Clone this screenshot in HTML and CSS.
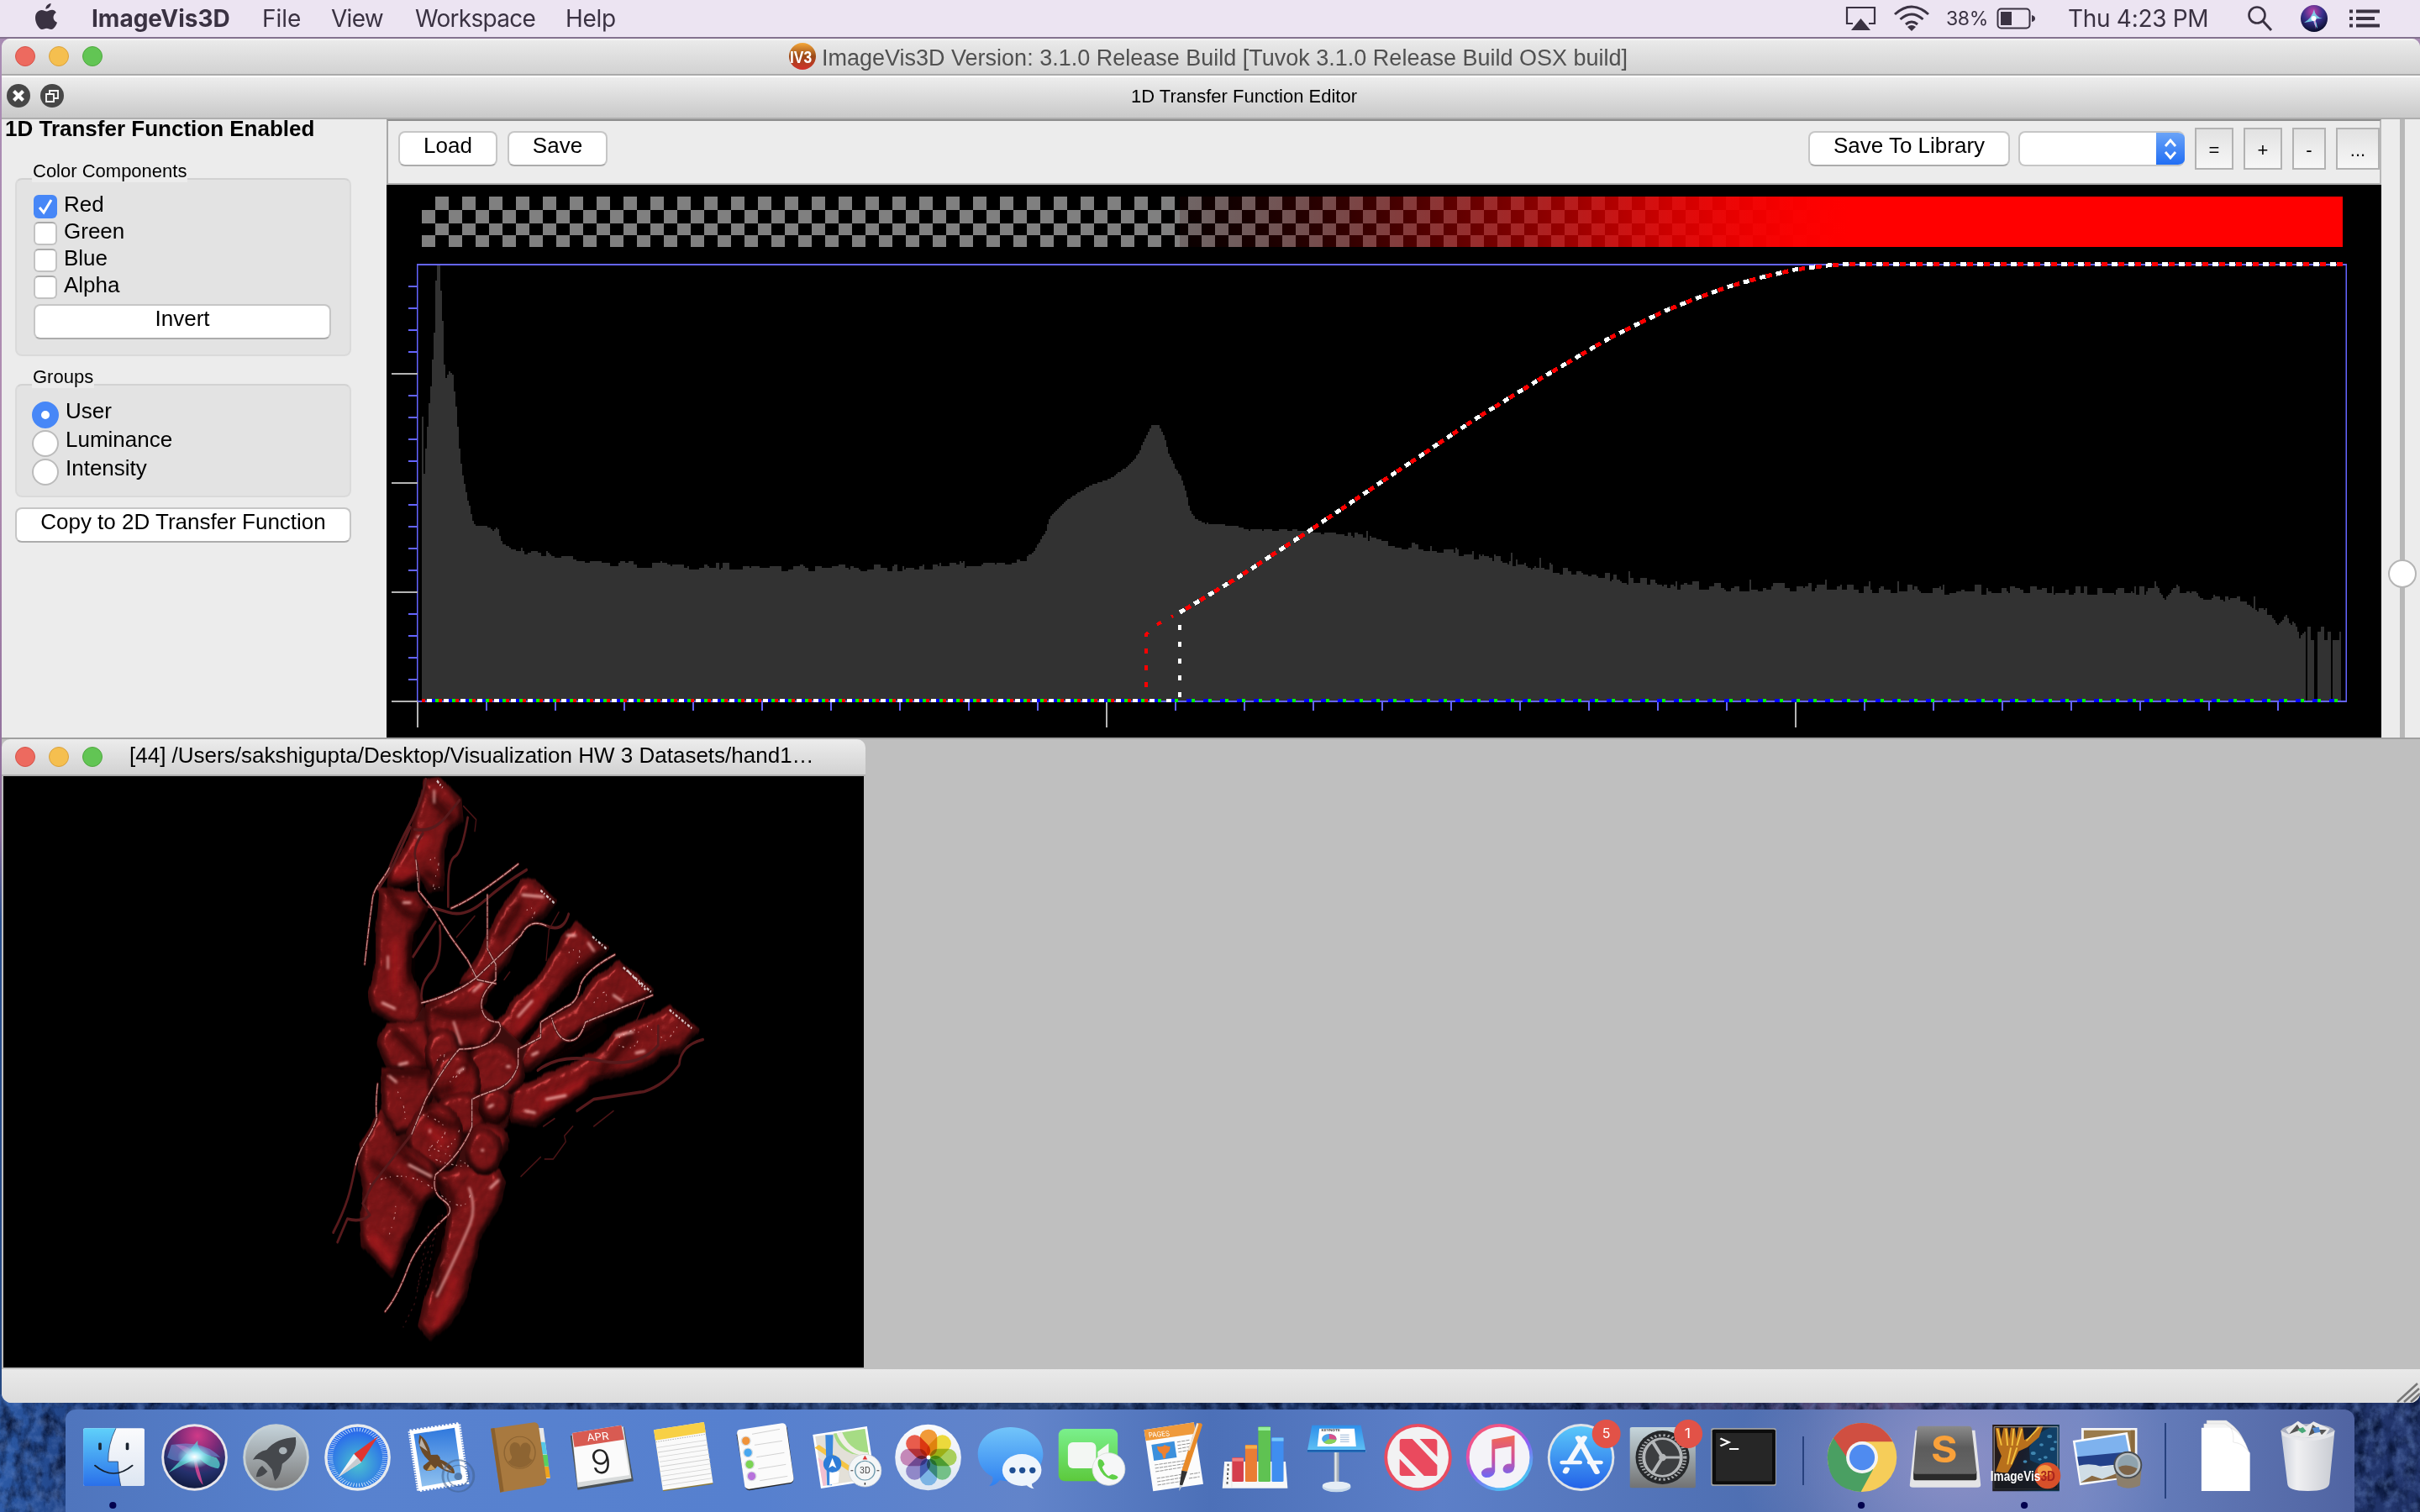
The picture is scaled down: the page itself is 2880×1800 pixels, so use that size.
FILE: index.html
```html
<!DOCTYPE html>
<html lang="en">
<head>
<meta charset="utf-8">
<title>ImageVis3D</title>
<link rel="stylesheet" href="styles.css">
</head>
<body>
<div class="desktop">
<svg class="wallpaper" width="2880" height="140" viewBox="0 0 2880 140" preserveAspectRatio="none">
  <defs>
    <linearGradient id="wp"><stop offset="0" stop-color="#2c5aa6"/><stop offset=".04" stop-color="#1c3a78"/><stop offset=".25" stop-color="#2a4276"/><stop offset=".4" stop-color="#26406f"/><stop offset=".6" stop-color="#132a5c"/><stop offset=".78" stop-color="#5a4e7c"/><stop offset=".84" stop-color="#1b2c5e"/><stop offset="1" stop-color="#22356c"/></linearGradient>
    <filter id="rough" x="0" y="0" width="1" height="1" color-interpolation-filters="sRGB"><feTurbulence type="fractalNoise" baseFrequency=".08 .07" numOctaves="5" seed="8"/><feColorMatrix values="0 0 0 0 .42  0 0 0 0 .54  0 0 0 0 .78  2.4 0 0 0 -1"/></filter>
    <filter id="rough2" x="0" y="0" width="1" height="1" color-interpolation-filters="sRGB"><feTurbulence type="fractalNoise" baseFrequency=".06 .04" numOctaves="5" seed="3"/><feColorMatrix values="0 0 0 0 .02  0 0 0 0 .07  0 0 0 0 .2  2.2 0 0 0 -.9"/></filter>
  </defs>
  <rect width="2880" height="140" fill="url(#wp)"/>
  <rect width="2880" height="140" filter="url(#rough2)"/>
  <rect width="2880" height="140" filter="url(#rough)" opacity=".45"/>
</svg>

<header class="menubar">
  <svg class="apple" width="28" height="34" viewBox="0 0 28 34"><path fill="#3a3242" d="M19.600 1c.2 3.200-3 6.800-6.200 6.700C13 4.600 16.300 1.300 19.600 1zM25.800 12c-5 3.300-4 9.700 1.200 11.800-1.300 3.800-4 8.200-7 8.200-2.200 0-2.900-1.300-5.500-1.300s-3.400 1.300-5.500 1.300C5.500 32 1 24.500 1 18.200 1 12.500 4.600 9 8.600 9c2.400 0 4.100 1.500 6 1.500 1.700 0 3.600-1.700 6.500-1.700 1.800 0 3.600 1 4.700 3.200z"/></svg>
  <b class="m-app">ImageVis3D</b><span class="m-file">File</span><span class="m-view">View</span><span class="m-work">Workspace</span><span class="m-help">Help</span>
  <div class="status">
    <svg width="38" height="30" viewBox="0 0 38 30"><path d="M9 21H2V2h33v19h-7" fill="none" stroke="#3a3242" stroke-width="2.200"/><path d="M18.500 15L30 29H7z" fill="#3a3242"/></svg>
    <svg class="wifi" width="44" height="32" viewBox="0 0 44 32"><g fill="none" stroke="#3a3242" stroke-width="3"><path d="M2 11Q22-7 42 11"/><path d="M8.500 17Q22 5 35.500 17"/><path d="M15 23Q22 17 29 23"/></g><path d="M22 31l-5-5q5-4 10 0z" fill="#3a3242"/></svg>
    <span class="pct">38%</span>
    <svg class="batt" width="48" height="26" viewBox="0 0 48 26"><rect x="1.500" y="1.500" width="38" height="23" rx="4" fill="none" stroke="#3a3242" stroke-width="2"/><rect x="5" y="5" width="13" height="16" fill="#3a3242"/><path d="M42 9q4 1 4 4t-4 4z" fill="#3a3242"/></svg>
    <span class="clock">Thu 4:23 PM</span>
    <svg class="search" width="32" height="32" viewBox="0 0 32 32"><circle cx="12" cy="12" r="9.500" fill="none" stroke="#3a3242" stroke-width="2.600"/><path d="M19 19l10 11" stroke="#3a3242" stroke-width="3"/></svg>
    <svg class="siri-s" width="34" height="34" viewBox="0 0 34 34"><defs><radialGradient id="ss" cx=".45" cy=".25" r=".75"><stop offset="0" stop-color="#c040a8"/><stop offset=".5" stop-color="#38308c"/><stop offset="1" stop-color="#080c28"/></radialGradient></defs><circle cx="17" cy="17" r="16" fill="url(#ss)"/><path d="M5 22Q14 17 17 6q1 9 10 11-8 0-9 1 2 4 3 11-4-4-5-9-5 1-11 2z" fill="#7fe3f2" opacity=".85"/><path d="M16 15l3 15-1-14z" fill="#ff7fd0"/><circle cx="16.500" cy="17" r="3" fill="#fff"/></svg>
    <svg class="list" width="36" height="22" viewBox="0 0 36 22"><path d="M0 2.500h4M8 2.500h28M0 11h4M8 11h22M0 19.500h4M8 19.500h28" stroke="#3a3242" stroke-width="4"/></svg>
  </div>
</header>

<main class="window">
  <div class="titlebar">
    <i class="light red"></i><i class="light amber"></i><i class="light green"></i>
    <div class="wtitle">
      <svg width="34" height="34" viewBox="0 0 34 34"><defs><linearGradient id="ic" x2="0" y2="1"><stop offset="0" stop-color="#f5a83a"/><stop offset=".5" stop-color="#9a4a18"/><stop offset="1" stop-color="#d2302a"/></linearGradient></defs><circle cx="17" cy="17" r="16" fill="url(#ic)"/><text transform="translate(2 25) scale(.83 1)" font-family="Liberation Sans" font-weight="700" font-size="21" fill="#fff">IV3</text></svg>
      <span>ImageVis3D Version: 3.1.0 Release Build [Tuvok 3.1.0 Release Build OSX build]</span>
    </div>
  </div>
  <div class="dockbar">
    <svg width="28" height="28" viewBox="0 0 28 28"><circle cx="14" cy="14" r="14" fill="#474747"/><path d="M8.500 8.500l11 11m0-11l-11 11" stroke="#fff" stroke-width="4.200"/></svg>
    <svg width="28" height="28" viewBox="0 0 28 28"><circle cx="14" cy="14" r="14" fill="#474747"/><path d="M7 12h9v9H7z M11 12V8h10v9h-5" fill="none" stroke="#fff" stroke-width="1.800"/></svg>
    <span>1D Transfer Function Editor</span>
  </div>
  <section class="editor">
    <aside class="side">
      <h1>1D Transfer Function Enabled</h1>
      <div class="glabel">Color Components</div>
      <div class="group g1">
        <div class="chk"><svg width="28" height="28" viewBox="0 0 28 28"><rect width="28" height="28" rx="6" fill="#4787f7"/><path d="M7 15l5 6 9-15" fill="none" stroke="#fff" stroke-width="3"/></svg><span>Red</span></div>
        <div class="chk"><i></i><span>Green</span></div>
        <div class="chk"><i></i><span>Blue</span></div>
        <div class="chk"><i></i><span>Alpha</span></div>
        <div class="btn invert">Invert</div>
      </div>
      <div class="glabel second">Groups</div>
      <div class="group g2">
        <div class="rad"><i class="on"></i><span>User</span></div>
        <div class="rad"><i></i><span>Luminance</span></div>
        <div class="rad"><i></i><span>Intensity</span></div>
      </div>
      <div class="btn copy">Copy to 2D Transfer Function</div>
    </aside>
    <div class="plot">
      <div class="tools">
        <div class="btn load">Load</div><div class="btn save">Save</div>
        <div class="btn lib">Save To Library</div>
        <div class="combo"><svg width="34" height="42" viewBox="0 0 34 42"><path d="M11 18l6-7 6 7M11 25l6 7 6-7" fill="none" stroke="#fff" stroke-width="2.800"/></svg></div>
        <div class="tb t1">=</div><div class="tb t2">+</div><div class="tb t3">-</div><div class="tb t4">...</div>
      </div>
      <svg id="chart" class="chart" width="2374" height="658" viewBox="460 220 2374 658" shape-rendering="crispEdges"></svg>
    </div>
    <div class="slider"><i></i></div>
  </section>
  <section class="workspace">
    <div class="sub">
      <div class="subbar"><i class="light red"></i><i class="light amber"></i><i class="light green"></i><span>[44] /Users/sakshigupta/Desktop/Visualization HW 3 Datasets/hand1…</span></div>
      <svg class="view" width="1024" height="704" viewBox="-1068 52.300 3072 1533" preserveAspectRatio="none">
        <defs>
          <filter id="bone" x="-.15" y="-.15" width="1.300" height="1.300" color-interpolation-filters="sRGB">
            <feTurbulence type="fractalNoise" baseFrequency=".014" numOctaves="3" seed="5" result="n"/>
            <feDisplacementMap in="SourceGraphic" in2="n" scale="20" xChannelSelector="R" yChannelSelector="G" result="d"/>
            <feMorphology in="d" operator="dilate" radius="3" result="d1"/>
            <feGaussianBlur in="d1" stdDeviation="12" result="b0"/>
            <feComposite in="n" in2="b0" operator="arithmetic" k2=".22" k3=".8" result="b"/>
            <feDiffuseLighting in="b" surfaceScale="38" diffuseConstant=".95" lighting-color="#861719" result="l"><feDistantLight azimuth="250" elevation="74"/></feDiffuseLighting>
            <feSpecularLighting in="b" surfaceScale="36" specularConstant=".6" specularExponent="50" lighting-color="#e07f7a" result="s"><feDistantLight azimuth="215" elevation="30"/></feSpecularLighting>
            <feComposite in="l" in2="s" operator="arithmetic" k2="1" k3=".6" result="ls"/>
            <feGaussianBlur in="d1" stdDeviation="2" result="edge"/>
            <feComposite in="ls" in2="edge" operator="in"/>
          </filter>
          <filter id="soft" x="-.5" y="-.5" width="2" height="2"><feGaussianBlur stdDeviation="4"/></filter>
          <filter id="shade" x="-.2" y="-.2" width="1.400" height="1.400"><feGaussianBlur stdDeviation="11"/></filter>
        </defs>
        <rect x="-1068" y="52" width="3072" height="1534"/>
        <g fill="#a00">
          <path filter="url(#bone)" d="M435 60L485 55 565 115 572 165 520 200 505 250 500 350 455 355 420 315 310 345 315 295 370 235 410 150z"/>
          <path filter="url(#bone)" d="M262 450L275 345 400 350 450 400 420 430 390 460 385 560 430 640 430 700 340 700 250 665 240 625 260 570z"/>
          <path filter="url(#bone)" d="M780 320L830 322 912 380 860 420 800 440 740 520 660 600 560 590 640 500 700 410z"/>
          <path filter="url(#bone)" d="M975 432L1090 500 1035 540 960 570 880 650 760 745 640 790 600 760 740 650 860 560 920 480z"/>
          <path filter="url(#bone)" d="M1130 530L1255 610 1210 640 1120 665 1010 710 880 780 800 820 750 800 850 700 960 650 1060 570z"/>
          <path filter="url(#bone)" d="M1310 645L1415 710 1350 770 1280 775 1210 815 1060 840 930 905 830 960 750 950 725 870 900 820 1040 770 1130 705 1230 680z"/>
          <path d="M430 650L700 690 800 760 730 960 560 1080 330 1010 290 830z" fill="#3d0c0e" filter="url(#soft)"/>
          <path filter="url(#bone)" d="M440 650L540 610 640 580 690 590 640 650 700 700 640 760 520 770 440 720z"/>
          <path filter="url(#bone)" d="M300 695L430 690 472 760 450 822 310 822 268 745z"/>
          <path filter="url(#bone)" d="M285 815L455 815 465 880 400 970 330 990 280 920z"/>
          <ellipse filter="url(#bone)" cx="500" cy="775" rx="62" ry="66"/>
          <ellipse filter="url(#bone)" cx="680" cy="820" rx="110" ry="70"/>
          <ellipse filter="url(#bone)" cx="548" cy="842" rx="88" ry="75"/>
          <ellipse filter="url(#bone)" cx="570" cy="930" rx="90" ry="58"/>
          <ellipse filter="url(#bone)" cx="475" cy="990" rx="100" ry="88"/>
          <ellipse filter="url(#bone)" cx="685" cy="905" rx="56" ry="46"/>
          <ellipse filter="url(#bone)" cx="665" cy="1000" rx="68" ry="50"/>
          <path filter="url(#bone)" d="M280 920L330 990 470 1060 500 1120 430 1160 385 1240 320 1350 215 1270 205 1180 225 1120 200 1070 205 1010z"/>
          <path filter="url(#bone)" d="M480 1090L560 1060 700 1075 722 1110 710 1150 640 1240 590 1370 555 1445 460 1518 415 1475 440 1400 500 1280 520 1180z"/>
          <circle filter="url(#bone)" cx="650" cy="1025" r="62"/>
        </g>
        <g fill="none" stroke="#120304" stroke-width="24" opacity=".65" filter="url(#shade)"><path d="M320 710Q420 770 445 810M290 825H450M300 340Q380 450 440 400M330 1010L490 1120M470 870Q600 870 600 740M610 900Q640 950 730 940M640 660Q560 690 450 650M500 1100Q540 1140 540 1180M460 900Q400 940 560 960M1080 700L880 790M930 590L1080 500M700 470L780 380M430 300L500 330M390 460L380 600M1060 820L1180 720M240 1050Q350 1100 420 1170M500 1190L480 1400M460 110L540 170"/></g>
        <g fill="none" stroke="#c41c20" stroke-width="30" stroke-linecap="round" opacity=".45" filter="url(#shade)"><path d="M250 1250L320 1310M480 1470L540 1360M330 490V600M620 600L660 585M770 700L850 620M860 900L1000 850M400 240L440 220M340 300H380M550 850L580 830M450 960L500 1000"/></g>
        <g fill="none" stroke="#f5b5b0" stroke-width="7" stroke-linecap="round" opacity=".85" filter="url(#soft)">
          <path d="M305 520V550M595 1120Q620 1170 600 1210T480 1400M870 890L940 880M795 920L830 925M770 675L820 635M610 610L640 590M540 690L565 745M1110 620L1140 635M1190 770L1220 765M360 380H385M410 210H420M470 90V120M380 1060L460 1090M555 820L575 810M345 800L375 795M455 970V975M640 1022H645M285 640L330 655M1020 485L1040 505M670 1120L700 1100M820 775L840 768M730 805H740M945 465H975M1120 725L1180 715M310 830L335 845M665 910L680 905M785 360L860 365"/></g>
        <g fill="none" stroke="#ffdcd8" stroke-width="3" stroke-dasharray="4 13 3 21 7 9" opacity=".6"><path d="M455 270Q500 250 480 300T470 345 500 340M800 400Q850 380 820 420M950 510Q1010 480 980 540M1040 640Q1100 580 1080 650M1130 730Q1210 690 1200 730T1130 750M480 790Q520 740 500 800M430 930Q560 960 480 1000T540 1060 440 1010M310 1240Q340 1180 330 1150M240 1110Q370 1060 480 1130T600 1130M340 870Q380 930 360 960M540 830Q500 870 590 800M1230 700L1300 740 1340 700M480 1000Q520 1040 560 970"/></g>
        <g fill="none" stroke="#fff" stroke-width="6" stroke-dasharray="9 5 4 7" opacity=".75"><path d="M850 348L900 382M1035 468L1085 500M1145 548L1250 615M1310 658L1395 709M480 64L500 82M1160 556L1225 606"/></g>
        <g fill="none" stroke-linecap="round" stroke-linejoin="round">
            <path stroke="#571a1c" stroke-width="8" d="M440 60Q430 110 380 180T310 290C290 320 255 340 250 370S240 420 222 540M400 190Q460 200 510 160L560 115M385 185L320 290 270 345M430 200Q390 240 405 270T415 350L470 400 530 470 590 530 625 580 690 590M590 160Q570 250 545 260T520 340V390M770 280Q700 320 640 350T530 395M800 295Q720 330 650 375T520 405L450 390M475 430L395 520M490 440Q500 530 460 560T425 630M660 360V500L690 540V580Q630 620 640 655T700 690Q720 710 680 735T560 760Q510 800 440 890L390 980 250 1110 215 1160 240 1190Q210 1210 160 1200L125 1260M425 640Q540 620 620 575L780 465Q810 420 870 440T950 410M1115 515Q1000 560 990 600T940 650L850 690 850 730 770 760V800Q750 850 690 865T605 890V960Q570 1030 475 1085 460 1130 500 1150T520 1190Q410 1260 375 1330T295 1440M268 850Q260 900 265 940C250 980 205 1010 190 1060S170 1150 110 1235M1250 620L1010 690Q990 740 950 738T890 680M1430 735Q1350 750 1345 800 1300 850 1220 870L1040 890 980 920M1270 700V750Q1200 810 1060 790T840 815"/>
          <path stroke="#d8a09c" stroke-width="3" stroke-dasharray="14 3 8 5" d="M310 290C290 320 255 340 250 370S240 420 222 540M405 270T415 350L470 400 530 470 590 530 625 580 690 590M770 280Q700 320 640 350T530 395M660 360V500L690 540V580Q630 620 640 655T700 690Q720 710 680 735T560 760Q510 800 440 890L390 980M425 640Q540 620 620 575L780 465Q810 420 870 440M1115 515Q1000 560 990 600T940 650L850 690 850 730 770 760V800Q750 850 690 865T605 890V960Q570 1030 475 1085 460 1130 500 1150T520 1190Q410 1260 375 1330T295 1440M268 850Q260 900 265 940C250 980 205 1010 190 1060M1250 620L1010 690Q990 740 950 738T890 680"/>
          <path stroke="#4a1416" stroke-width="4" d="M780 1090L850 1040M865 1045L895 1045 940 1000 935 985 965 960M1040 960L1110 920M860 960L900 940M550 470L615 415M740 560L720 580M575 130L620 165 615 195M870 530L880 450 915 405M1190 690L1220 640"/>
          <path stroke="#331012" stroke-width="4" stroke-dasharray="3 15" d="M500 1190L430 1320 400 1420 360 1480M450 1220L410 1380M470 1250L440 1380"/>
        </g>
      </svg>
    </div>
  </section>
  <footer class="statusbar"><svg width="28" height="24" viewBox="0 0 28 24"><path d="M1 23L25 1M9 23L27 7M17 23L28 13" stroke="#777" stroke-width="2.500"/></svg></footer>
</main>

<nav class="dock">
  <svg class="slot" viewBox="177 174 200 366" preserveAspectRatio="none"><defs><linearGradient id="fb" x2="0" y2="1"><stop offset="0" stop-color="#5fd0fa"/><stop offset="1" stop-color="#2a70ea"/></linearGradient><linearGradient id="wg" x2="0" y2="1"><stop offset="0" stop-color="#fbfbfd"/><stop offset="1" stop-color="#dde6f2"/></linearGradient></defs><rect x="204" y="241" width="150" height="206" rx="6" fill="url(#wg)"/><path d="M210 241H284Q264 300 265 360H289Q290 410 296 447H210Q204 447 204 440V248Q204 241 210 241z" fill="url(#fb)"/><path d="M284 241Q264 300 265 360H289Q290 410 296 447" fill="none" stroke="#27436e" stroke-width="2"/><path d="M245 296V315M312 296V315" stroke="#1b2430" stroke-width="7.500" stroke-linecap="round"/><path d="M233 374Q278 430 324 374" fill="none" stroke="#16202c" stroke-width="5" stroke-linecap="round"/><ellipse cx="276.500" cy="516" rx="8.500" ry="12" fill="#02024e"/></svg>
  <svg class="slot" viewBox="377 174 200 366" preserveAspectRatio="none"><defs><radialGradient id="sg" cx=".55" cy=".15" r=".95"><stop offset="0" stop-color="#d03a88"/><stop offset=".35" stop-color="#7a2a78"/><stop offset=".65" stop-color="#24306c"/><stop offset="1" stop-color="#0a1430"/></radialGradient><radialGradient id="gl"><stop offset="0" stop-color="#fff"/><stop offset=".35" stop-color="#bff6ff" stop-opacity=".9"/><stop offset="1" stop-color="#6fe" stop-opacity="0"/></radialGradient></defs><ellipse cx="477" cy="345" rx="81" ry="119" fill="#e9e6ea"/><ellipse cx="477" cy="345" rx="75" ry="110" fill="url(#sg)"/><path d="M413 400Q460 330 485 284 480 330 530 345 545 370 535 385 510 380 490 350 480 345 413 400z" fill="#55d8d0" opacity=".75"/><path d="M430 300Q470 300 480 345 490 400 498 443 480 420 475 350z" fill="#e64a98" opacity=".8"/><path d="M420 300Q500 280 540 345 480 330 470 350 440 370 410 345z" fill="#6aa6ea" opacity=".5"/><ellipse cx="477" cy="343" rx="42" ry="42" fill="url(#gl)"/></svg>
  <svg class="slot" viewBox="578 174 200 366" preserveAspectRatio="none"><defs><linearGradient id="lg" x2="0" y2="1"><stop offset="0" stop-color="#c3d1d8"/><stop offset="1" stop-color="#7c7c7c"/></linearGradient></defs><ellipse cx="678" cy="345" rx="81" ry="119" fill="#c6d0d4"/><ellipse cx="678" cy="345" rx="75" ry="110" fill="url(#lg)"/><path d="M726 273Q732 330 693 368 690 410 675 429 670 405 668 388L655 365Q640 345 621 353 632 325 655 318 680 275 726 273z" fill="#45484c"/><path d="M644 375L657 395Q645 415 629 415 632 385 644 375z" fill="#45484c"/><ellipse cx="695" cy="321" rx="10" ry="13" fill="#aab3b8"/></svg>
  <svg class="slot" viewBox="777 174 200 366" preserveAspectRatio="none"><defs><radialGradient id="sf" cy=".6"><stop offset="0" stop-color="#4bc3cf"/><stop offset="1" stop-color="#2b6dea"/></radialGradient></defs><ellipse cx="877" cy="345" rx="81" ry="119" fill="#e8ebee"/><ellipse cx="877" cy="345" rx="74" ry="109" fill="url(#sf)"/><ellipse cx="877" cy="345" rx="67" ry="99" fill="none" stroke="#cfe6fa" stroke-width="13" stroke-dasharray="2 5"/><path d="M927 270L886 362 868 332z" fill="#e0352f"/><path d="M829 416L868 332 886 362z" fill="#f1f2f4"/><path d="M829 416L877 346 886 362z" fill="#c7cbd0"/></svg>
  <svg class="slot" viewBox="980 174 200 366" preserveAspectRatio="none"><defs><linearGradient id="sk" x2="0" y2="1"><stop offset="0" stop-color="#2f78dd"/><stop offset="1" stop-color="#8fc1ef"/></linearGradient></defs><path d="M1008 250L1128 224 1149 436 1030 464z" fill="#fff" stroke="#fff" stroke-width="9" stroke-dasharray="5 4"/><path d="M1018 262L1118 239 1136 424 1038 449z" fill="url(#sk)"/><path d="M1032 264Q1054 285 1060 336L1076 335Q1085 345 1082 352 1100 362 1112 378 1120 392 1117 403 1095 398 1076 376 1068 395 1050 393 1038 385 1042 374L1056 358Q1034 330 1030 290z" fill="#6b4a28"/><path d="M1036 275l16 48-20-20zM1086 366l26 30-20-10z" fill="#b8b0a8"/><path d="M1060 370l12 18-22 4z" fill="#c99f5c"/><g fill="none" stroke="#42628e" opacity=".55" stroke-width="6"><ellipse cx="1127" cy="411" rx="38" ry="56"/><ellipse cx="1127" cy="411" rx="26" ry="38" stroke-width="4"/></g><ellipse cx="1127" cy="413" rx="10" ry="13" fill="#42628e" opacity=".7"/></svg>
  <svg class="slot" viewBox="1178 174 200 366" preserveAspectRatio="none"><path d="M1322 240h12l16 180h-16z" fill="#e8e8e8"/><path d="M1325 290l13 0 5 44h-12z" fill="#56c8e8"/><path d="M1330 335l14 0 3 42h-12z" fill="#58d060"/><path d="M1334 378l13 0 4 40h-12z" fill="#eda31d"/><path d="M1205 242L1312 220Q1320 222 1322 232L1342 432 1334 444 1228 470z" fill="#a8793f"/><path d="M1205 242l9-2 23 226-9 4z" fill="#8a602e"/><ellipse cx="1276" cy="328" rx="38" ry="57" fill="none" stroke="#8d6432" stroke-width="3"/><path d="M1247 360Q1262 350 1254 335 1246 300 1262 291 1277 292 1277 310 1280 290 1294 293 1308 302 1300 335 1296 350 1308 354 1296 380 1276 382 1256 380 1247 360z" fill="#8d6432"/></svg>
  <svg class="slot" viewBox="1378 174 200 366" preserveAspectRatio="none"><path d="M1400 268L1532 238 1555 430 1418 461z" fill="#4b5256"/><path d="M1404 262L1530 235 1550 420 1418 452z" fill="#d9dcdc"/><path d="M1405 258L1525 230 1545 408 1418 434z" fill="#fbfbfb"/><path d="M1405 258L1525 230 1532 281 1410 308z" fill="#d85b52"/><g font-family="Inter" text-anchor="middle"><text transform="translate(1469 284) rotate(-7)" font-size="37" textLength="54" lengthAdjust="spacingAndGlyphs" fill="#fff">APR</text><text transform="translate(1479 402) rotate(-5)" font-size="118" font-weight="300" textLength="50" lengthAdjust="spacingAndGlyphs" fill="#222">9</text></g></svg>
  <svg class="slot" viewBox="135 174 200 366" preserveAspectRatio="none"><path d="M162 248L285 220 307 440 185 466z" fill="#8b7a3a"/><path d="M162 247L285 219 307 436 184 462z" fill="#fafafa"/><path d="M162 247L285 219 289 256 166 284z" fill="#f8d045"/><path d="M167 290L290 262" stroke="#999" stroke-width="2" stroke-dasharray="3 3"/><path d="M170 310l122-27M172 327l122-27M174 344l122-27M176 361l122-27M178 378l122-27M179 395l122-27M181 412l122-27M182 429l122-27M184 446l122-27" stroke="#d2d2d2" stroke-width="2.500"/></svg>
  <svg class="slot" viewBox="336 174 200 366" preserveAspectRatio="none"><path d="M370 252L480 226Q488 230 490 240L506 420Q506 433 500 438L398 463Q390 462 388 452L366 265z" fill="#27292c"/><path d="M372 246L478 223Q486 224 488 234L506 420Q506 430 500 434L396 458Q388 457 386 448L367 258Q367 249 372 246z" fill="#fbfbfb"/><g stroke="#d8dce0" stroke-width="3"><ellipse cx="389" cy="286" rx="11" ry="16" fill="#f0933a"/><ellipse cx="394" cy="328" rx="11" ry="16" fill="#48a8f0"/><ellipse cx="398" cy="370" rx="11" ry="16" fill="#7bd454"/><ellipse cx="403" cy="412" rx="11" ry="16" fill="#b873dc"/></g><path d="M404 262l68-18M410 301l68-15M415 344l68-16M419 386l68-16M423 428l68-16" stroke="#c9c9c9" stroke-width="2"/></svg>
  <svg class="slot" viewBox="538 174 200 366" preserveAspectRatio="none"><path d="M555 264L688 234 708 425 575 456z" fill="#fff"/><path d="M561 270L683 243 701 420 580 447z" fill="#e3e0d8"/><path d="M606 260L683 243 693 340Q620 340 606 260z" fill="#a6dc84"/><path d="M620 257Q640 330 690 335" stroke="#f1efe8" stroke-width="14" fill="none"/><path d="M565 305L650 390" stroke="#f6c544" stroke-width="15"/><path d="M568 345l20 22v78l-8 2z" fill="#f3bfd0"/><path d="M586 265h19l-3 180h-12z" fill="#3a86dc"/><path d="M596 395h24l-2 40-22 8z" fill="#fff"/><ellipse cx="603" cy="368" rx="22" ry="31" fill="#2e7dd8"/><path d="M603 347l10 36-10-8-9 8z" fill="#fff"/><ellipse cx="683" cy="392" rx="40" ry="58" fill="#f4f6f7" stroke="#ccd2d8" stroke-width="2"/><ellipse cx="683" cy="392" rx="24" ry="34" fill="none" stroke="#6d99ac" stroke-width="3"/><path d="M683 339l5 13h-10z" fill="#d33" stroke="#d33"/><path d="M683 435v8M648 392h6M712 392h6" stroke="#333" stroke-width="3"/><text x="683" y="403" text-anchor="middle" font-family="Inter" font-size="29" textLength="26" lengthAdjust="spacingAndGlyphs" fill="#333">3D</text></svg>
  <svg class="slot" viewBox="735 174 200 366" preserveAspectRatio="none"><ellipse cx="835" cy="345" rx="81" ry="118" fill="url(#wg)"/><g transform="translate(836 345) scale(1 1.450)"><g class="petals"><rect x="-21" y="-69" width="42" height="66" rx="20" fill="#f19a38"/><rect x="-21" y="-69" width="42" height="66" rx="20" fill="#ecd93c" transform="rotate(45)"/><rect x="-21" y="-69" width="42" height="66" rx="20" fill="#a9cf5c" transform="rotate(90)"/><rect x="-21" y="-69" width="42" height="66" rx="20" fill="#74c088" transform="rotate(135)"/><rect x="-21" y="-69" width="42" height="66" rx="20" fill="#7cb4e4" transform="rotate(180)"/><rect x="-21" y="-69" width="42" height="66" rx="20" fill="#9088c8" transform="rotate(225)"/><rect x="-21" y="-69" width="42" height="66" rx="20" fill="#c488b8" transform="rotate(270)"/><rect x="-21" y="-69" width="42" height="66" rx="20" fill="#e85c4c" transform="rotate(315)"/></g><circle r="5" fill="#fff"/></g></svg>
  <svg class="slot" viewBox="938 174 200 366" preserveAspectRatio="none"><defs><linearGradient id="mg" x2="0" y2="1"><stop offset="0" stop-color="#72c5fa"/><stop offset="1" stop-color="#2f80f0"/></linearGradient></defs><path d="M1038 237C1085 237 1118 280 1118 333S1085 430 1038 430Q1022 430 1012 426 1000 448 986 447 997 432 994 414C970 397 958 366 958 333 958 280 991 237 1038 237z" fill="url(#mg)"/><ellipse cx="1066" cy="390" rx="48" ry="57" fill="#eef5fc"/><path d="M1075 440q8 14 21 17-8-10-5-25z" fill="#eef5fc"/><g fill="#1f4f94"><ellipse cx="1043" cy="391" rx="7.500" ry="11"/><ellipse cx="1067" cy="391" rx="7.500" ry="11"/><ellipse cx="1092" cy="391" rx="7.500" ry="11"/></g></svg>
  <svg class="slot" viewBox="1136 174 200 366" preserveAspectRatio="none"><defs><linearGradient id="fg" x2="0" y2="1"><stop offset="0" stop-color="#7af08c"/><stop offset="1" stop-color="#5cc93c"/></linearGradient></defs><rect x="1154" y="243" width="145" height="187" rx="16" ry="22" fill="url(#fg)"/><rect x="1177" y="291" width="69" height="93" rx="12" ry="18" fill="#f3f7f3"/><path d="M1250 325l27-30v85l-27-30z" fill="#f3f7f3"/><ellipse cx="1277" cy="387" rx="40" ry="58" fill="#f6f7f8" stroke="#d5dcd5" stroke-width="2"/><path d="M1254 352q8-4 13 18l-6 10q6 22 16 32l8-7q14 5 15 12-5 10-15 7-24-8-34-50-2-18 3-22z" fill="#5fd048"/></svg>
  <svg class="slot" viewBox="1336 174 200 366" preserveAspectRatio="none"><path d="M1364 247L1486 220 1509 440 1386 466z" fill="#fcfcfc"/><path d="M1364 247L1486 220 1490 260 1368 286z" fill="#ef9a3b"/><text transform="translate(1376 274) rotate(-7)" font-family="Inter" font-size="25" textLength="52" lengthAdjust="spacingAndGlyphs" fill="#fff">PAGES</text><path d="M1382 300l56-13 6 58-56 12z" fill="#3c90dc"/><path d="M1396 305q15 5 18-5 10 8 14 5 0 20-10 26l-2 18h-5l-3-17q-12-8-12-27z" fill="#ee8130"/><path d="M1445 290l30-7M1446 302l30-7M1447 314l28-7M1448 326l26-7M1390 372l84-18M1391 384l80-18M1392 396l75-18M1395 420l60-14M1396 432l58-14M1397 444l55-13M1474 420l26-6M1476 405l25-6" stroke="#9a9a9a" stroke-width="3" stroke-dasharray="9 2"/><path d="M1493 223q12-4 14 6L1470 395l-14-2z" fill="#e88a28"/><path d="M1493 223q6 0 4 6L1476 320l-5 0z" fill="#f0e3d2"/><path d="M1456 392l14 3-12 50-7-2z" fill="#333"/><path d="M1451 443l7 2-8 20z" fill="#c8ced4"/></svg>
  <svg class="slot" viewBox="91 174 200 366" preserveAspectRatio="none"><path d="M116 360h150l5 95H111z" fill="#f7f7f7"/><path d="M134 360v92" stroke="#ccc"/><g fill="#555"><path d="M123 368h4v8h-4zM123 384h4v8h-4zM122 400h4v8h-4zM122 416h4v8h-4zM121 432h4v8h-4z"/></g><rect x="135" y="345" width="28" height="87" rx="3" fill="#d43e4c"/><rect x="167" y="300" width="29" height="132" rx="3" fill="#ea7d34"/><rect x="199" y="235" width="30" height="197" rx="3" fill="#5fc252"/><rect x="232" y="273" width="29" height="159" rx="3" fill="#3f8ef0"/><path d="M135 347h28v12h-28z" fill="#f08080"/><path d="M167 302h29v12h-29z" fill="#f5b04a"/><path d="M199 237h30v12h-30z" fill="#96f09a"/><path d="M232 275h29v12h-29z" fill="#78c8fa"/></svg>
  <svg class="slot" viewBox="294 174 200 366" preserveAspectRatio="none"><defs><linearGradient id="kg" x2="0" y2="1"><stop offset="0" stop-color="#2e8fea"/><stop offset="1" stop-color="#62c3f5"/></linearGradient></defs><path d="M388 326h12v120h-12z" fill="#a9b2bb"/><path d="M390 326h4v120h-4z" fill="#e4e9ee"/><ellipse cx="394" cy="450" rx="35" ry="19" fill="#c7d9ea"/><ellipse cx="394" cy="445" rx="34" ry="14" fill="#e4edf5"/><path d="M334 230h120l12 96H322z" fill="url(#kg)"/><path d="M323 318h142v8H322z" fill="#1a5fae"/><path d="M352 242h86l4 64h-95z" fill="#fff"/><text x="357" y="253" font-family="Inter" font-weight="700" font-size="11" textLength="46" lengthAdjust="spacingAndGlyphs" fill="#444">KEYNOTE</text><ellipse cx="376" cy="279" rx="18" ry="18" fill="#4aa5e8"/><path d="M376 279l-14 12q10 12 24 3zM376 279l18 2q-2 12-8 13z" fill="#8bd15a"/><path d="M376 279v-18q18 2 18 20z" fill="#d8508c"/><path d="M403 265h22M403 273h22M403 281h22M403 289h22" stroke="#9ab8d8" stroke-width="3"/></svg>
  <svg class="slot" viewBox="496 174 200 366" preserveAspectRatio="none"><ellipse cx="596" cy="345" rx="83" ry="120" fill="#e84c60"/><ellipse cx="596" cy="345" rx="75" ry="109" fill="#f2f2f3"/><path d="M556 279h26l61 93v32q0 7-6 7h-26l-60-90v-33q0-9 5-9zM600 279h35q8 0 8 9v55zM551 350l40 61h-34q-6 0-6-8z" fill="#ea4a5e"/></svg>
  <svg class="slot" viewBox="694 174 200 366" preserveAspectRatio="none"><defs><linearGradient id="ig" x2=".6" y2="1"><stop offset="0" stop-color="#f4605c"/><stop offset=".35" stop-color="#ee4ea0"/><stop offset=".6" stop-color="#8a5cf4"/><stop offset="1" stop-color="#45c8f4"/></linearGradient><linearGradient id="ig2" x2="0" y2="1"><stop offset="0" stop-color="#f26a52"/><stop offset=".55" stop-color="#d0509c"/><stop offset="1" stop-color="#6a68f8"/></linearGradient></defs><ellipse cx="794" cy="345" rx="82" ry="120" fill="url(#ig)"/><ellipse cx="794" cy="345" rx="74" ry="109" fill="#f4f3f8"/><path d="M775 281L831 266V378Q829 402 812 402 800 398 803 382 806 366 823 368V305L783 315V395Q780 417 760 417 748 412 750 396 756 380 775 382z" fill="url(#ig2)"/></svg>
  <svg class="slot" viewBox="896 174 200 366" preserveAspectRatio="none"><defs><linearGradient id="ag" x2="0" y2="1"><stop offset="0" stop-color="#5ac8fa"/><stop offset="1" stop-color="#2462e8"/></linearGradient></defs><ellipse cx="996" cy="345" rx="82" ry="120" fill="#dfe3e8"/><ellipse cx="996" cy="345" rx="76" ry="111" fill="url(#ag)"/><g stroke="#f5f8fc" stroke-linecap="round" stroke-width="14"><path d="M1004 275L967 362M989 275L1035 398M951 363H992M1018 363H1043M961 387L958 396"/></g><ellipse cx="1058" cy="261" rx="35" ry="51" fill="#e25247"/><text x="1048" y="277" font-family="Inter" font-size="46" textLength="20" lengthAdjust="spacingAndGlyphs" fill="#fff">5</text></svg>
  <svg class="slot" viewBox="1094 174 200 366" preserveAspectRatio="none"><defs><linearGradient id="pg" x2="0" y2="1"><stop offset="0" stop-color="#c6d6dc"/><stop offset="1" stop-color="#717273"/></linearGradient></defs><rect x="1114" y="237" width="161" height="217" rx="5" fill="url(#pg)"/><ellipse cx="1194" cy="345" rx="66" ry="96" fill="#26282a"/><ellipse cx="1194" cy="345" rx="55" ry="79" fill="none" stroke="#a8abad" stroke-width="9" stroke-dasharray="5 6"/><ellipse cx="1194" cy="345" rx="46" ry="67" fill="#3c3e40" stroke="#b4b7b9" stroke-width="8"/><path d="M1194 345h46M1194 345l-24-56M1194 345l-24 56" stroke="#b4b7b9" stroke-width="9"/><ellipse cx="1194" cy="345" rx="9" ry="13" fill="#b4b7b9"/><ellipse cx="1257" cy="261" rx="35" ry="51" fill="#e25247"/><text x="1248" y="277" font-family="Inter" font-size="46" textLength="15" lengthAdjust="spacingAndGlyphs" fill="#fff">1</text></svg>
  <svg class="slot" viewBox="1297 174 200 366" preserveAspectRatio="none"><rect x="1316" y="240" width="160" height="207" rx="7" fill="#9d9fa2"/><rect x="1319" y="245" width="155" height="197" rx="5" fill="#0c0c0c"/><rect x="1328" y="258" width="138" height="172" fill="#262626"/><path d="M1339 277l21 14-21 13M1361 315h23" fill="none" stroke="#fff" stroke-width="6"/></svg>
  <div class="sep short"></div>
  <svg class="slot" viewBox="99 174 200 366" preserveAspectRatio="none"><ellipse cx="200" cy="345" rx="85" ry="123" fill="#f6cd59"/><path d="M200 345L131 274Q115 310 115 345 118 460 197 468L227 388z" fill="#4a9f62"/><path d="M130 276Q155 222 200 222 250 222 275 289H200L165 350z" fill="#d04f41"/><ellipse cx="200" cy="345" rx="39" ry="57" fill="#f4f4f4"/><ellipse cx="200" cy="345" rx="31" ry="46" fill="#4f8bf0"/><ellipse cx="198" cy="516" rx="8.500" ry="12" fill="#02024e"/></svg>
  <svg class="slot" viewBox="300 174 200 366" preserveAspectRatio="none"><defs><linearGradient id="su" x2="0" y2="1"><stop offset="0" stop-color="#8b8b8b"/><stop offset=".45" stop-color="#5c5c5c"/><stop offset="1" stop-color="#666"/></linearGradient></defs><path d="M330 248h146l14 195q0 9-8 9H324q-9 0-8-9z" fill="#e4e4e6"/><path d="M325 395h155v25q0 7-6 7H331q-6 0-6-7z" fill="#2a2a2a"/><path d="M340 233h120q7 0 8 9l12 155q0 7-6 7H331q-6 0-6-7l9-155q0-9 6-9z" fill="url(#su)"/><text x="368" y="364" font-family="Inter" font-weight="700" font-size="130" textLength="65" lengthAdjust="spacingAndGlyphs" fill="#f9a13a">S</text></svg>
  <svg class="slot" viewBox="501 174 200 366" preserveAspectRatio="none"><defs><linearGradient id="hb" x1="0" x2="1" y2=".3"><stop offset="0" stop-color="#2a1a14"/><stop offset=".55" stop-color="#1a1e2c"/><stop offset="1" stop-color="#10384f"/></linearGradient></defs><path d="M520 228h164v238H520z" fill="url(#hb)"/><path d="M610 310q20-60 60-75l12 0v130q-30 20-70-10z" fill="#113f66"/><g fill="#3f86b0"><circle cx="660" cy="270" r="6"/><circle cx="640" cy="300" r="5"/><circle cx="667" cy="315" r="6"/><circle cx="620" cy="330" r="6"/><circle cx="650" cy="345" r="5"/><circle cx="600" cy="360" r="5"/><circle cx="674" cy="290" r="4"/><circle cx="636" cy="352" r="4"/></g><path d="M527 240h10l4 40 6-41h10l4 40 4-40h10l3 40 6-41h10l4 45 20-15 12-35h14l-10 40-28 35-22 15-16 50-12 30-28-8 14-55-10-35z" fill="#b8701c"/><path d="M532 242l10 60M553 243l4 60M572 243l-4 60M592 243l-12 60M635 236l-32 50M565 310l-8 60M580 310l-14 60" stroke="#f4c23e" stroke-width="4"/><path d="M524 236h156v222H524z" fill="none" stroke="#b8b8b8" stroke-width="2"/><path d="M522 400h161v62H522z" fill="#171a20" opacity=".85"/><ellipse cx="655" cy="410" rx="32" ry="47" fill="#d8502a"/><ellipse cx="648" cy="392" rx="18" ry="20" fill="#f39a42"/><text transform="translate(515 430) scale(.585 1)" font-family="Liberation Sans" font-weight="700" font-size="48" fill="#fff">ImageVis<tspan fill="#a8241c">3D</tspan></text><ellipse cx="598" cy="516" rx="8.500" ry="12" fill="#02024e"/></svg>
  <svg class="slot" viewBox="702 174 200 366" preserveAspectRatio="none"><path d="M739 240h137v150H739z" fill="#f4f4f4"/><path d="M745 248h125v80H745z" fill="#9a7b4c"/><path d="M860 248h10v90h-10z" fill="#8a6a3c"/><path d="M718 285L852 255 872 415 735 445z" fill="#fbfbfb"/><path d="M724 292L847 264 856 330 730 345z" fill="#7eb2ee"/><path d="M729 343L856 325 862 365 734 385z" fill="#23418a"/><path d="M732 375q30-12 60 5 30-10 70-10l4 40-128 27z" fill="#cfdde6"/><path d="M737 435l28-25 25 12 40-22 30 5v8z" fill="#8a6a42"/><path d="M820 375l8 70q25 20 55 0l4-70z" fill="#8c7f6c"/><ellipse cx="853" cy="372" rx="35" ry="49" fill="#484c50"/><ellipse cx="853" cy="372" rx="31" ry="43" fill="#b9c0c4"/><ellipse cx="853" cy="372" rx="25" ry="36" fill="#8fa3ae"/><path d="M830 380q20-15 46 5-5 22-23 23-18-3-23-28z" fill="#7d6448"/></svg>
  <div class="sep tall"></div>
  <svg class="slot" viewBox="989 174 200 366" preserveAspectRatio="none"><defs><linearGradient id="dg" x1="1" x2=".5" y2=".6"><stop offset="0" stop-color="#ccc"/><stop offset=".5" stop-color="#fff"/></linearGradient></defs><path d="M1045 213h48q40 40 46 90l-94 10z" fill="#eee" stroke="#ccc"/><path d="M1038 225h52q38 35 52 90l-104 10z" fill="#f4f4f4" stroke="#ccc"/><path d="M1032 239h70q14 10 16 55 22 5 33 35v136h-119z" fill="#fff"/><path d="M1104 240q30 20 44 85-15-32-38-34 2-32-6-51z" fill="url(#dg)" stroke="#ccc"/></svg>
  <svg class="slot" viewBox="1190 174 200 366" preserveAspectRatio="none"><defs><linearGradient id="tg"><stop offset="0" stop-color="#c9cfda"/><stop offset=".3" stop-color="#f0f0f2"/><stop offset="1" stop-color="#c8cbd2"/></linearGradient></defs><path d="M1228 248q66-26 132 0l-13 190q-3 27-53 27t-50-27z" fill="url(#tg)"/><ellipse cx="1294" cy="250" rx="65" ry="25" fill="#aab0c0"/><path d="M1240 245l30-30 20 20 18-18 40 26-12 27-50 5-35-8z" fill="#e9e9ea"/><path d="M1248 262l20-35 8 20zM1296 268l10-40 18 20zM1320 245l20 2-12 18z" fill="#555"/><path d="M1268 245l14-8 8 14-10 8z" fill="#48a878"/><path d="M1305 240l16-4 4 18-14 4z" fill="#5088d0"/><path d="M1228 250q66 50 132 0-2 14-4 18-60 36-124 0z" fill="#e6e7ea" opacity=".9"/></svg>
</nav>
</div>
<script src="chart.js"></script>
</body>
</html>
```
FILE: styles.css
```css
* { box-sizing: border-box; }
body { margin: 0; width: 2880px; height: 1800px; overflow: hidden; font-family: "Liberation Sans", Arial, sans-serif; color: #000; }
svg { display: block; flex: none; }
.desktop { position: relative; width: 2880px; height: 1800px; display: flex; flex-direction: column; background: linear-gradient(#a88cb4, #b08cb0 30%, #8a6a98 55%, #2a5090 61%, #24467e); }
.wallpaper { position: absolute; left: 0; bottom: 0; }

.menubar { height: 46px; flex: none; display: flex; align-items: center; padding: 0 46px 1px 41px; background: #ece4f2; border-bottom: 2px solid #84728f; font: 28px Inter, sans-serif; color: #3a3242; white-space: nowrap; }
.apple { margin-top: -4px; }
.menubar b, .menubar span { flex: none; line-height: 42px; padding-top: 1px; }
.m-app { margin-left: 40px; width: 203px; letter-spacing: 0; }
.m-file { width: 82px; }
.m-view { width: 100px; letter-spacing: -.7px; }
.m-work { width: 179px; letter-spacing: -.7px; }
.m-help { letter-spacing: -.3px; }
.status { margin-left: auto; display: flex; align-items: center; position: relative; left: -2px; }
.wifi { margin-left: 19px; }
.menubar .pct { font-size: 23px; margin-left: 19px; width: 60px; letter-spacing: -.4px; }
.menubar .clock { margin-left: 37px; width: 213px; letter-spacing: -.3px; }
.siri-s { margin-left: 31px; }
.list { margin-left: 25px; }

.window { position: relative; width: 2878px; margin-left: 2px; height: 1624px; flex: none; display: flex; flex-direction: column; border-radius: 10px 10px 12px 12px; overflow: hidden; background: #ececec; }
.titlebar { height: 44px; flex: none; display: flex; align-items: center; gap: 16px; padding-left: 16px; background: linear-gradient(#f6f6f6, #e9e9e9 8%, #d2d2d2); border-bottom: 2px solid #aaa; }
.light { width: 24px; height: 24px; border-radius: 50%; flex: none; border: 1px solid; }
.red { background: #ed6a5f; border-color: #d55248; }
.amber { background: #f5bf4f; border-color: #d9a13c; }
.green { background: #62c554; border-color: #4fa73f; }
.wtitle { display: flex; align-items: center; gap: 6px; margin-left: 800px; font-size: 27px; color: #505050; white-space: nowrap; }
.wtitle span { padding-top: 4px; }
.dockbar { height: 52px; flex: none; display: flex; align-items: center; gap: 12px; padding: 0 0 2px 6px; background: linear-gradient(#fff 0 3%, #ededed 5%, #c9c9c9); border-bottom: 2px solid #aeaeae; }
.dockbar span { margin-left: 1258px; font-size: 22px; padding-top: 1px; }
.editor { height: 736px; flex: none; display: flex; }
.side { width: 458px; padding: 0 42px 0 16px; }
.side h1 { margin: 0 0 26px -12px; font-size: 26px; line-height: 22px; white-space: nowrap; }
.glabel { position: relative; width: max-content; margin: 0 0 -5px 20px; height: 27px; line-height: 27px; font-size: 22px; padding: 0 1px; background: #ececec; }
.second { margin-top: 11px; }
.group { background: #e3e3e3; border: 2px solid #dadada; border-top-color: #d2d2d2; border-radius: 8px; padding: 16px 22px 0 20px; }
.g1 { height: 212px; }
.g2 { height: 135px; padding: 18px 0 0 18px; }
.chk, .rad { display: flex; align-items: center; height: 32px; font-size: 26px; gap: 8px; }
.chk span { padding-bottom: 6px; }
.chk i { width: 28px; height: 28px; background: #fff; border: 2px solid #c2c2c2; border-top-color: #aaa; border-radius: 6px; }
.rad { height: 34px; }
.rad span { padding-bottom: 10px; }
.rad i { width: 32px; height: 32px; border-radius: 50%; background: #fff; border: 2px solid #bbb; }
.rad i.on { background: #fff; border: 11px solid #4787f7; }
.btn { height: 42px; flex: none; background: #fff; border: 2px solid #c6c6c6; border-bottom-color: #acacac; border-radius: 8px; font-size: 26px; line-height: 30px; text-align: center; white-space: nowrap; }
.invert { margin-top: 4px; width: 354px; }
.copy { margin-top: 12px; width: 400px; }
.plot { width: 2374px; flex: none; }
.tools { height: 78px; display: flex; padding: 8px 0 0 12px; border-left: 2px solid #a8a8a8; border-top: 2px solid #8d8d8d; border-bottom: 2px solid #b0b0b0; border-right: 2px solid #b8b8b8; }
.tools > .btn { margin-top: 4px; }
.load { width: 118px; }
.save { width: 119px; margin-left: 12px; }
.lib { width: 240px; margin-left: auto; }
.combo { margin: 4px 12px 0 10px; width: 198px; height: 42px; border-radius: 8px; border: 2px solid #c6c6c6; border-right: 0; background: #fff; display: flex; justify-content: flex-end; align-items: center; overflow: hidden; }
.combo svg { background: linear-gradient(#6ea6f7, #1d6bf4); }
.tb { height: 50px; width: 46px; margin-right: 12px; border: 2px solid #b2b2b2; background: linear-gradient(#e2e2e2, #f7f7f7); font-size: 22px; line-height: 49px; text-align: center; }
.t3 { width: 40px; }
.t4 { width: 52px; margin-right: 0; }
.chart { background: #000; }
.slider { width: 46px; display: flex; justify-content: center; padding-left: 4px; background: linear-gradient(90deg, transparent 22px, #b8b8b8 22px 28px, transparent 28px); }
.slider i { width: 34px; height: 34px; margin-top: 524px; border-radius: 50%; background: #fff; border: 2px solid #b5b5b5; }
.workspace { height: 752px; flex: none; background: #bfbfbf; border-top: 2px solid #a0a0a0; }
.sub { width: 1028px; }
.subbar { height: 44px; display: flex; align-items: center; gap: 16px; padding: 0 0 1px 16px; background: linear-gradient(#ececec, #d2d2d2); border-radius: 10px 10px 0 0; border-bottom: 2px solid #b0b0b0; font-size: 26px; white-space: nowrap; }
.subbar span { margin-left: 16px; padding-bottom: 2px; }
.view { margin-left: 2px; }
.statusbar { flex: 1; background: linear-gradient(#e9e9e9, #dcdcdc); display: flex; justify-content: flex-end; align-items: flex-end; }

.dock { position: absolute; left: 78px; bottom: 0; width: 2724px; height: 122px; display: flex; padding-left: 7.500px; border-radius: 12px 12px 0 0; background: radial-gradient(ellipse 260px 200px at 2250px 60px, #8c90c6, transparent), linear-gradient(90deg, #4f75bd, #5882cf 12%, #5680cf 30%, #6284ca 42%, #4c70b8 50%, #5c7fc8 60%, #4c6cae 76%, #6b84c2 88%, #5064a2); }
.slot { width: 97.100px; height: 122px; }
.petals { isolation: isolate; }
.petals rect { mix-blend-mode: multiply; }
.sep { width: 43px; flex: none; display: flex; justify-content: center; }
.sep::before { content: ""; width: 2px; background: #27417e; margin-top: 32px; height: 58px; }
.tall::before { margin-top: 16px; height: 90px; }
```
FILE: chart.js
```js
// Transfer function plot: checker strip, histogram, axes and dotted curves.
const NS = "http://www.w3.org/2000/svg";
const chart = document.getElementById("chart");
function add(name, attrs, parent) {
  const el = document.createElementNS(NS, name);
  for (const k in attrs) el.setAttribute(k, attrs[k]);
  (parent || chart).appendChild(el);
  return el;
}

const curve = [[1404,729],[1406,728],[1474,687],[1558,632],[1657,565],[1757,498],[1833,451],[1911,405],[1946,387],[1984,369],[2022,354],[2058,341],[2097,330],[2136,321],[2175,316],[2200,314],[2788,314]];

let cells = "";
const rows = [[234,16],[250,16],[266,14],[280,14]];
rows.forEach(([y, h], r) => {
  for (let x = r % 2 ? 502 : 518; x < 2788; x += 32) cells += `M${x} ${y}h${Math.min(16, 2788 - x)}v${h}h-16z`;
});
add("path", { d: cells, fill: "#808080" });
const grad = add("linearGradient", { id: "ramp", gradientUnits: "userSpaceOnUse", x1: 1400, x2: 2788, y1: 0, y2: 0 }, add("defs", {}));
curve.forEach(([x, y]) => {
  const v = (834 - y) / 520;
  add("stop", { offset: (x - 1400) / 1388, "stop-color": `rgb(${Math.round(v * 255)},0,0)`, "stop-opacity": v }, grad);
});
add("rect", { x: 1404, y: 234, width: 1384, height: 60, fill: "url(#ramp)" });

const hist = [[502,496],[504,564],[506,534],[508,508],[510,480],[512,460],[514,428],[516,396],[518,334],[520,316],[523,316],[524,345],[526,382],[528,434],[530,450],[532,445],[534,442],[538,446],[540,466],[542,484],[544,508],[546,534],[548,552],[550,566],[553,580],[555,593],[558,602],[561,618],[565,626],[579,627],[586,631],[591,627],[594,638],[597,647],[602,652],[621,654],[624,660],[649,658],[655,664],[680,663],[689,668],[710,670],[762,672],[826,674],[960,676],[1080,676],[1150,672],[1200,668],[1221,663],[1229,657],[1236,645],[1244,632],[1248,617],[1259,605],[1272,593],[1296,578],[1320,570],[1345,552],[1355,538],[1361,523],[1369,507],[1378,506],[1385,520],[1390,540],[1398,557],[1405,568],[1410,583],[1415,607],[1422,617],[1433,623],[1470,626],[1489,631],[1556,632],[1583,635],[1629,642],[1655,648],[1687,651],[1730,655],[1762,663],[1800,668],[1843,676],[1896,685],[1950,692],[2040,699],[2300,702],[2565,703],[2576,712],[2581,701],[2608,705],[2624,712],[2651,714],[2677,717],[2688,725],[2702,728],[2710,743],[2720,733],[2731,747],[2736,762],[2744,752]];
let seed = 7;
const rnd = () => (seed = (seed * 16807) % 2147483647) / 2147483647;
let bars = "", k = 0, hold = 0, left = 0;
for (let x = 502; x < 2744; x += 2) {
  while (k < hist.length - 2 && hist[k + 1][0] <= x) k++;
  const [x0, y0] = hist[k], [x1, y1] = hist[k + 1];
  const amp = x < 600 || (x > 1220 && x < 1430) ? 0 : x < 1220 ? 4 : x < 1600 ? 1.5 : 5.5;
  if (left-- <= 0) {
    left = Math.floor(rnd() * 4);
    hold = (rnd() - 0.5) * 2 * amp;
    if (amp > 5 && rnd() > 0.96) { hold = -10; left = 0; }
  }
  const y = 2 * Math.round((y0 + (y1 - y0) * (x - x0) / (x1 - x0) + hold) / 2);
  bars += `M${x} ${y}h2V834h-2z`;
}
[[2746,4,746],[2750,4,762],[2758,4,752],[2762,4,746],[2766,4,762],[2770,4,752],[2776,8,762],[2784,2,752]].forEach(([x, w, y]) => { bars += `M${x} ${y}h${w}V834h-${w}z`; });
add("path", { d: bars, fill: "#323232" });

let minor = "M496 314H2793V836H496zM497.500 316V834H2791.500V316z", major = "";
for (let i = 1; i <= 20; i++) {
  const y = 314 + i * 26;
  if (i % 5) minor += `M486 ${y}h10v2h-10z`; else major += `M466 ${y}h31v2h-31z`;
}
for (let i = 0; i <= 27; i++) {
  const x = Math.round(496 + i * 82);
  if (i % 10) minor += `M${x} 836h2v10h-2z`; else major += `M${x} 836h2v30h-2z`;
}
add("path", { d: minor, fill: "#6464ff", "fill-rule": "evenodd", "shape-rendering": "auto" });
add("path", { d: major, fill: "#b4b4b4" });

function dots(from, to, start, w, color) {
  let d = "";
  for (let x = start; x < to; x += 20) if (x >= from) d += `M${x} 832h${w}v4h-${w}z`;
  add("path", { d, fill: color });
}
dots(502, 2788, 512, 6, "#0000ff");
dots(502, 2788, 518, 4, "#00ff00");
dots(502, 1368, 502, 4, "#ff0000");
dots(502, 1400, 508, 6, "#ffffff");

const pts = a => a.map(p => p.join(",")).join(" ");
const style = { fill: "none", "stroke-width": 5 };
add("polyline", { ...style, points: pts([[1364,834],[1364,755],[1378,743],[1396,733]]), stroke: "#ff0000", "stroke-width": 4, "stroke-dasharray": "6 14", "stroke-dashoffset": -16 });
add("polyline", { ...style, points: pts(curve), stroke: "#ff0000", "stroke-dasharray": "7 13", "stroke-dashoffset": -8 });
add("polyline", { ...style, points: pts([[1404,834],[1404,735]]), stroke: "#ffffff", "stroke-width": 4, "stroke-dasharray": "6 14", "stroke-dashoffset": -4 });
add("polyline", { ...style, points: pts(curve), stroke: "#ffffff", "stroke-dasharray": "7 13" });
```
